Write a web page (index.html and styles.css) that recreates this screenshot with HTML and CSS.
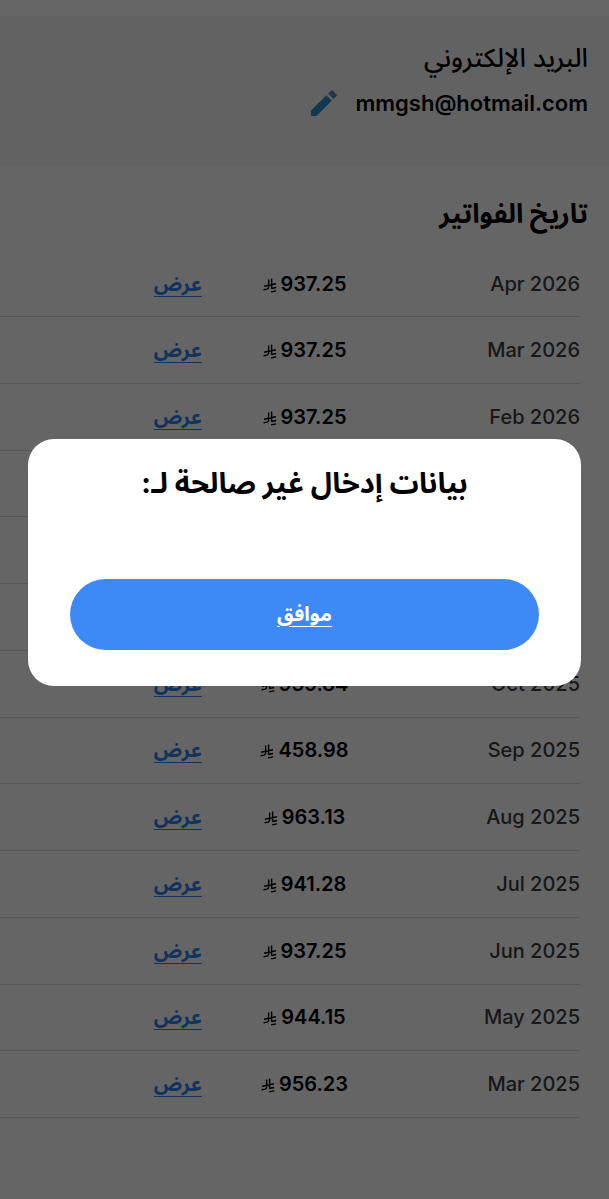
FILE: index.html
```html
<!DOCTYPE html>
<html lang="ar" dir="rtl">
<head>
    <meta charset="utf-8">
    <meta name="viewport" content="width=device-width, initial-scale=1">
    <title>تاريخ الفواتير</title>
    <link rel="stylesheet" href="styles.css">
</head>
<body>
    <svg width="0" height="0" class="symbols" aria-hidden="true">
        <symbol id="riyal" viewBox="0 0 26 28">
            <path d="M10.500 3v14q0 3-3 3.700L1 22M16 1v19M2 15.500l22-4.700M16 19.500l8.500-1.800M16 19.500v-5M15 26l9.500-2" fill="none" stroke="currentColor" stroke-width="2.600"/>
        </symbol>
    </svg>

    <section class="account">
        <h2 class="account-label">البريد الإلكتروني</h2>
        <div class="account-row">
            <span class="account-email" dir="ltr">mmgsh@hotmail.com</span>
            <button type="button" class="edit-button" aria-label="تعديل">
                <svg viewBox="0 0 26 26" width="26" height="26">
                    <path d="M0 21.500q0-1 .7-1.700L15.300 5.200l5.500 5.500L6.200 25.300q-.7.700-1.700.7H1q-1 0-1-1z" fill="#2f8ccb"/>
                    <path d="M17 3.500L19.800.7q1-1 2 0l3.500 3.500q1 1 0 2L22.500 9z" fill="#4a92c6"/>
                </svg>
            </button>
        </div>
    </section>

    <main class="bills">
        <h1 class="bills-title">تاريخ الفواتير</h1>
        <table class="bills-table">
            <tbody id="billRows"></tbody>
        </table>
    </main>

    <div class="overlay">
        <div class="dialog" role="alertdialog" aria-modal="true" aria-labelledby="dialogTitle">
            <h2 class="dialog-title" id="dialogTitle">بيانات إدخال غير صالحة لـ:</h2>
            <button type="button" class="dialog-button">موافق</button>
        </div>
    </div>

    <script src="main.js"></script>
</body>
</html>
```

FILE: styles.css
```css
* {
    box-sizing: border-box;
}

body {
    margin: 0;
    padding-top: 16px;
    background-color: #fcfcff;
    color: #000;
    font-family: Inter, "Noto Sans Arabic", "DejaVu Sans", sans-serif;
}

h1,
h2 {
    margin: 0;
}

.symbols {
    position: absolute;
}

/* Account e-mail */
.account {
    min-height: 150px;
    padding: 24px 21px;
    background-color: #f6f6f5;
    box-shadow: 0 -16px 0 #fff;
}

.account-label {
    font-size: 26px;
    font-weight: 500;
    line-height: 36px;
}

.account-row {
    display: flex;
    align-items: center;
    gap: 18px;
    margin-top: 9px;
    line-height: 36px;
}

.account-email {
    font-size: 22px;
    font-weight: 600;
}

.edit-button {
    display: flex;
    padding: 0;
    border: none;
    background: none;
    cursor: pointer;
}

/* Bill history */
.bills-title {
    padding: 28px 21px 17px;
    font-size: 27px;
    font-weight: 700;
    line-height: 40px;
}

.bills-table {
    width: calc(100% - 29px);
    height: 867px;
    margin-right: 29px;
    border-collapse: collapse;
    table-layout: fixed;
    font-size: 20px;
    font-weight: 500;
}

.bills-table th,
.bills-table td {
    padding: 0;
    border-bottom: 1px solid #d8d8dc;
    line-height: 30px;
}

.bill-month {
    width: 36%;
    color: #3c3c40;
    font-weight: 500;
    text-align: right;
}

.bill-amount {
    width: 23%;
    font-weight: 600;
    text-align: center;
}

.bill-amount svg {
    width: 14px;
    height: 15px;
    margin-right: 4px;
    vertical-align: -2px;
}

.bills-table .bill-action {
    width: 41%;
    padding-right: 36px;
}

.bill-action a {
    color: #2f7fe6;
    font-weight: 700;
    text-decoration-thickness: 1px;
    text-underline-offset: 5px;
}

/* Alert dialog */
.overlay {
    position: fixed;
    inset: 0;
    display: flex;
    align-items: center;
    justify-content: center;
    padding: 0 28px 74px;
    background-color: rgba(0, 0, 0, 0.6);
}

.dialog {
    width: 100%;
    padding: 24px 42px 36px;
    border-radius: 26px;
    background-color: #fff;
    text-align: center;
}

.dialog-title {
    font-size: 29px;
    font-weight: 700;
    line-height: 40px;
}

.dialog-button {
    width: 100%;
    height: 71px;
    margin-top: 76px;
    border: none;
    border-radius: 36px;
    background-color: #3d89f6;
    color: #fff;
    font-family: inherit;
    font-size: 20px;
    font-weight: 700;
    text-decoration: underline;
    text-decoration-thickness: 1px;
    text-underline-offset: 5px;
    cursor: pointer;
}
```

FILE: main.js
```js
const bills = [
    ['Apr 2026', '937.25'],
    ['Mar 2026', '937.25'],
    ['Feb 2026', '937.25'],
    ['Jan 2026', '937.25'],
    ['Dec 2025', '937.25'],
    ['Nov 2025', '937.25'],
    ['Oct 2025', '939.84'],
    ['Sep 2025', '458.98'],
    ['Aug 2025', '963.13'],
    ['Jul 2025', '941.28'],
    ['Jun 2025', '937.25'],
    ['May 2025', '944.15'],
    ['Mar 2025', '956.23']
];

document.getElementById('billRows').innerHTML = bills.map(([month, amount]) => `
    <tr>
        <th scope="row" class="bill-month"><bdi>${month}</bdi></th>
        <td class="bill-amount" dir="ltr"><svg aria-hidden="true"><use href="#riyal"/></svg>${amount}</td>
        <td class="bill-action"><a href="#">عرض</a></td>
    </tr>
`).join('');
```
